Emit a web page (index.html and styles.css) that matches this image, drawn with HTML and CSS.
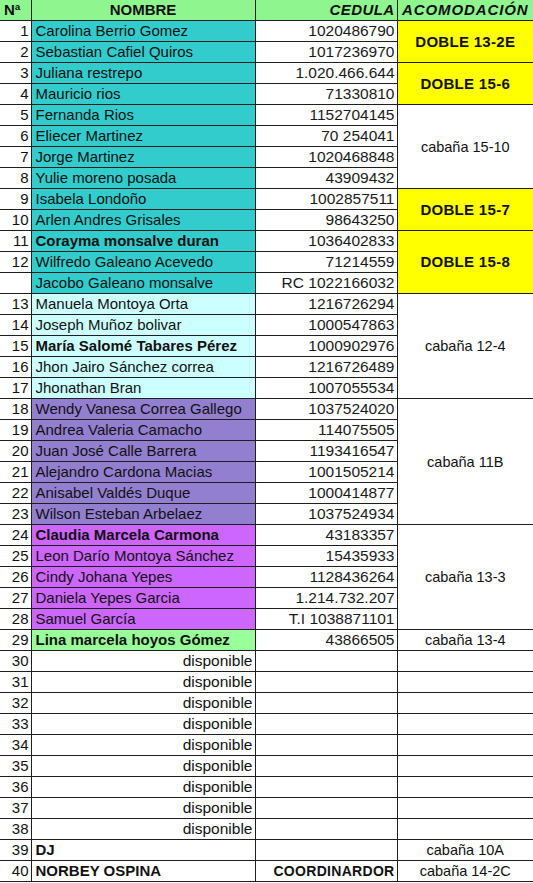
FILE: index.html
```html
<!DOCTYPE html>
<html lang="es">
<head>
<meta charset="utf-8">
<title>Lista acomodación</title>
<link rel="stylesheet" href="styles.css">
</head>
<body>
<table class="sheet">
  <colgroup>
    <col class="c-num"><col class="c-name"><col class="c-ced"><col class="c-aco">
  </colgroup>
  <thead>
    <tr class="head">
      <th class="h-num">Nª</th>
      <th class="h-name">NOMBRE</th>
      <th class="h-ced">CEDULA</th>
      <th class="h-aco">ACOMODACIÓN</th>
    </tr>
  </thead>
  <tbody>
    <tr><td class="num">1</td><td class="name teal">Carolina Berrio Gomez</td><td class="ced">1020486790</td><td class="aco yellow" rowspan="2">DOBLE 13-2E</td></tr>
    <tr><td class="num">2</td><td class="name teal">Sebastian Cafiel Quiros</td><td class="ced">1017236970</td></tr>
    <tr><td class="num">3</td><td class="name teal">Juliana restrepo</td><td class="ced">1.020.466.644</td><td class="aco yellow" rowspan="2">DOBLE 15-6</td></tr>
    <tr><td class="num">4</td><td class="name teal">Mauricio rios</td><td class="ced">71330810</td></tr>
    <tr><td class="num">5</td><td class="name teal">Fernanda Rios</td><td class="ced">1152704145</td><td class="aco plain" rowspan="4">cabaña 15-10</td></tr>
    <tr><td class="num">6</td><td class="name teal">Eliecer Martinez</td><td class="ced">70 254041</td></tr>
    <tr><td class="num">7</td><td class="name teal">Jorge Martinez</td><td class="ced">1020468848</td></tr>
    <tr><td class="num">8</td><td class="name teal">Yulie moreno posada</td><td class="ced">43909432</td></tr>
    <tr><td class="num">9</td><td class="name teal">Isabela Londoño</td><td class="ced">1002857511</td><td class="aco yellow" rowspan="2">DOBLE 15-7</td></tr>
    <tr><td class="num">10</td><td class="name teal">Arlen Andres Grisales</td><td class="ced">98643250</td></tr>
    <tr><td class="num">11</td><td class="name teal bold">Corayma monsalve duran</td><td class="ced">1036402833</td><td class="aco yellow" rowspan="3">DOBLE 15-8</td></tr>
    <tr><td class="num">12</td><td class="name teal">Wilfredo Galeano Acevedo</td><td class="ced">71214559</td></tr>
    <tr><td class="num"></td><td class="name teal">Jacobo Galeano monsalve</td><td class="ced">RC 1022166032</td></tr>
    <tr><td class="num">13</td><td class="name cyan">Manuela Montoya Orta</td><td class="ced">1216726294</td><td class="aco plain" rowspan="5">cabaña 12-4</td></tr>
    <tr><td class="num">14</td><td class="name cyan">Joseph Muñoz bolivar</td><td class="ced">1000547863</td></tr>
    <tr><td class="num">15</td><td class="name cyan bold">María Salomé Tabares Pérez</td><td class="ced">1000902976</td></tr>
    <tr><td class="num">16</td><td class="name cyan">Jhon Jairo Sánchez correa</td><td class="ced">1216726489</td></tr>
    <tr><td class="num">17</td><td class="name cyan">Jhonathan Bran</td><td class="ced">1007055534</td></tr>
    <tr><td class="num">18</td><td class="name purple">Wendy Vanesa Correa Gallego</td><td class="ced">1037524020</td><td class="aco plain" rowspan="6">cabaña 11B</td></tr>
    <tr><td class="num">19</td><td class="name purple">Andrea Valeria Camacho</td><td class="ced">114075505</td></tr>
    <tr><td class="num">20</td><td class="name purple">Juan José Calle Barrera</td><td class="ced">1193416547</td></tr>
    <tr><td class="num">21</td><td class="name purple">Alejandro Cardona Macias</td><td class="ced">1001505214</td></tr>
    <tr><td class="num">22</td><td class="name purple">Anisabel Valdés Duque</td><td class="ced">1000414877</td></tr>
    <tr><td class="num">23</td><td class="name purple">Wilson Esteban Arbelaez</td><td class="ced">1037524934</td></tr>
    <tr><td class="num">24</td><td class="name magenta bold">Claudia Marcela Carmona</td><td class="ced">43183357</td><td class="aco plain" rowspan="5">cabaña 13-3</td></tr>
    <tr><td class="num">25</td><td class="name magenta">Leon Darío Montoya Sánchez</td><td class="ced">15435933</td></tr>
    <tr><td class="num">26</td><td class="name magenta">Cindy Johana Yepes</td><td class="ced">1128436264</td></tr>
    <tr><td class="num">27</td><td class="name magenta">Daniela Yepes Garcia</td><td class="ced">1.214.732.207</td></tr>
    <tr><td class="num">28</td><td class="name magenta">Samuel García</td><td class="ced">T.I 1038871101</td></tr>
    <tr><td class="num">29</td><td class="name green bold">Lina marcela hoyos Gómez</td><td class="ced">43866505</td><td class="aco plain">cabaña 13-4</td></tr>
    <tr><td class="num">30</td><td class="name free">disponible</td><td class="ced"></td><td class="aco plain"></td></tr>
    <tr><td class="num">31</td><td class="name free">disponible</td><td class="ced"></td><td class="aco plain"></td></tr>
    <tr><td class="num">32</td><td class="name free">disponible</td><td class="ced"></td><td class="aco plain"></td></tr>
    <tr><td class="num">33</td><td class="name free">disponible</td><td class="ced"></td><td class="aco plain"></td></tr>
    <tr><td class="num">34</td><td class="name free">disponible</td><td class="ced"></td><td class="aco plain"></td></tr>
    <tr><td class="num">35</td><td class="name free">disponible</td><td class="ced"></td><td class="aco plain"></td></tr>
    <tr><td class="num">36</td><td class="name free">disponible</td><td class="ced"></td><td class="aco plain"></td></tr>
    <tr><td class="num">37</td><td class="name free">disponible</td><td class="ced"></td><td class="aco plain"></td></tr>
    <tr><td class="num">38</td><td class="name free">disponible</td><td class="ced"></td><td class="aco plain"></td></tr>
    <tr><td class="num">39</td><td class="name bold">DJ</td><td class="ced"></td><td class="aco plain">cabaña 10A</td></tr>
    <tr><td class="num">40</td><td class="name bold">NORBEY OSPINA</td><td class="ced role">COORDINARDOR</td><td class="aco plain">cabaña 14-2C</td></tr>
  </tbody>
</table>
</body>
</html>
```

FILE: styles.css
```css
html, body {
  margin: 0;
  padding: 0;
  background: #ffffff;
}

.sheet {
  border-collapse: collapse;
  table-layout: fixed;
  width: 533px;
  font-family: "Liberation Sans", Arial, sans-serif;
  font-size: 14px;
  color: #111;
}

.c-num { width: 31px; }
.c-name { width: 224px; }
.c-ced { width: 142px; }
.c-aco { width: 136px; }

.sheet th,
.sheet td {
  height: 20px;
  padding: 0 3px 0 3px;
  border-right: 1px solid #1e1e1e;
  border-bottom: 1px solid #1e1e1e;
  white-space: nowrap;
  overflow: hidden;
  line-height: 20px;
  vertical-align: bottom;
}

.sheet th:last-child,
.sheet td.aco {
  border-right: none;
}

.sheet .head th {
  background: #8ff58f;
  font-weight: bold;
  font-size: 15px;
  padding-bottom: 0;
}

.sheet .h-num { text-align: left; font-size: 16px; padding-left: 4px; }
.sheet .h-name { text-align: center; font-size: 15px; }
.sheet .h-ced { text-align: right; font-style: italic; letter-spacing: 0.4px; padding-right: 2px; }
.sheet .h-aco { text-align: center; font-style: italic; letter-spacing: 0.9px; padding: 0 2px; }

.sheet .num {
  text-align: right;
  font-size: 15px;
  padding-right: 2px;
}

.sheet .name {
  text-align: left;
  font-size: 15px;
  padding-left: 4px;
}

.sheet .ced {
  text-align: right;
  font-size: 15.5px;
  color: #1a1a1a;
  padding-right: 2px;
}

.sheet .role {
  font-weight: bold;
  font-size: 14px;
  letter-spacing: 0.3px;
  color: #111;
}

.sheet .aco {
  text-align: center;
  vertical-align: middle;
  font-size: 14.5px;
}

.sheet .yellow {
  background: #ffff00;
  font-weight: bold;
  font-size: 15px;
  letter-spacing: 0.3px;
}

.plain { background: #ffffff; }

.teal { background: #33cccc; }
.cyan { background: #ccffff; }
.purple { background: #937fcf; }
.magenta { background: #cc66ff; }
.green { background: #99ff99; }

.sheet .bold { font-weight: bold; }

.sheet .free {
  text-align: right;
  font-size: 15.5px;
  padding-right: 2px;
}
```
